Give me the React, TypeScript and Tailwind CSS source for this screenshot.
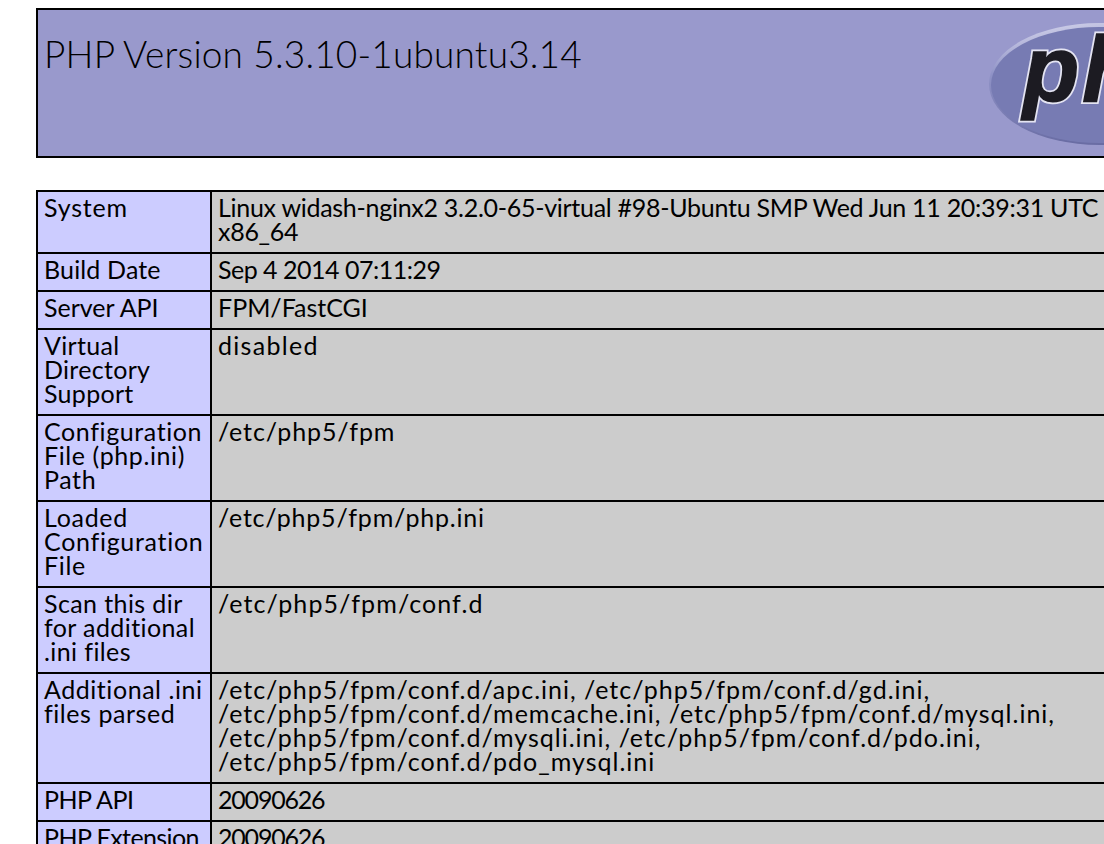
const rows: { k: string; v: string; kc: string; vc: string }[] = [
  { k: 'System', v: 'Linux widash-nginx2 3.2.0-65-virtual #98-Ubuntu SMP Wed Jun 11 20:39:31 UTC 2014 x86_64', kc: 'tracking-[0.8px]', vc: 'tracking-[-0.28px]' },
  { k: 'Build Date', v: 'Sep 4 2014 07:11:29', kc: 'tracking-[0.15px]', vc: 'tracking-[-0.5px]' },
  { k: 'Server API', v: 'FPM/FastCGI', kc: 'tracking-[0px]', vc: 'tracking-[0px]' },
  { k: 'Virtual Directory Support', v: 'disabled', kc: 'tracking-[0.3px]', vc: 'tracking-[1.3px]' },
  { k: 'Configuration File (php.ini) Path', v: '/etc/php5/fpm', kc: 'tracking-[0.6px]', vc: 'tracking-[0.9px]' },
  { k: 'Loaded Configuration File', v: '/etc/php5/fpm/php.ini', kc: 'tracking-[0.7px]', vc: 'tracking-[0.8px]' },
  { k: 'Scan this dir for additional .ini files', v: '/etc/php5/fpm/conf.d', kc: 'tracking-[0.4px]', vc: 'tracking-[1.1px]' },
  { k: 'Additional .ini files parsed', v: '/etc/php5/fpm/conf.d/apc.ini, /etc/php5/fpm/conf.d/gd.ini, /etc/php5/fpm/conf.d/memcache.ini, /etc/php5/fpm/conf.d/mysql.ini, /etc/php5/fpm/conf.d/mysqli.ini, /etc/php5/fpm/conf.d/pdo.ini, /etc/php5/fpm/conf.d/pdo_mysql.ini', kc: 'tracking-[0.55px]', vc: 'tracking-[1px]' },
  { k: 'PHP API', v: '20090626', kc: 'tracking-[-0.5px]', vc: 'tracking-[-1.2px]' },
  { k: 'PHP Extension Build', v: '20090626', kc: 'tracking-[-0.6px]', vc: 'tracking-[-1.2px]' },
]

function PhpLogo() {
  const font = "'Liberation Sans', sans-serif"
  return (
    <svg width="222" height="124" viewBox="0 0 222 124" className="shrink-0">
      <defs>
        <linearGradient id="rim" x1="0" y1="0" x2="0.25" y2="1">
          <stop offset="0" stopColor="#dcdcf0" />
          <stop offset="0.4" stopColor="#8f92c6" />
          <stop offset="1" stopColor="#6a6da4" />
        </linearGradient>
      </defs>
      <ellipse cx="111" cy="62" rx="110" ry="61" fill="url(#rim)" />
      <ellipse cx="111" cy="63" rx="108" ry="58" fill="#777bb3" />
      <text x="35" y="79" fontFamily={font} fontWeight="700" fontStyle="italic" fontSize="92" letterSpacing="3" fill="#e4e4f2" stroke="#e4e4f2" strokeWidth="5">
        php
      </text>
      <text x="35" y="79" fontFamily={font} fontWeight="700" fontStyle="italic" fontSize="92" letterSpacing="3" fill="#1c1b22" stroke="#1c1b22" strokeWidth="1.5">
        php
      </text>
    </svg>
  )
}

export default function App() {
  return (
    <div className="h-[844px] overflow-hidden bg-white text-black font-['Lato',sans-serif]">
      <div className="w-[1176px] ml-9 pt-2">
        <div className="flex justify-between h-[150px] border-2 border-black bg-[#9999cc] pl-[6px] pt-3">
          <h1 className="mt-2 text-[37px] leading-[48px] font-light tracking-[0.17px]">PHP Version 5.3.10-1ubuntu3.14</h1>
          <PhpLogo />
        </div>
        <table className="mt-8 w-full table-fixed border-collapse text-[25px] leading-6">
          <colgroup>
            <col className="w-[174px]" />
            <col />
          </colgroup>
          <tbody>
            {rows.map(r => (
              <tr key={r.k}>
                <td className={`border-2 border-black bg-[#ccccff] pl-[6px] pr-0 pt-[3px] pb-[9px] align-top ${r.kc}`}>{r.k}</td>
                <td className={`border-2 border-black bg-[#cccccc] px-[6px] pt-[3px] pb-[9px] align-top ${r.vc}`}>{r.v}</td>
              </tr>
            ))}
          </tbody>
        </table>
      </div>
    </div>
  )
}
